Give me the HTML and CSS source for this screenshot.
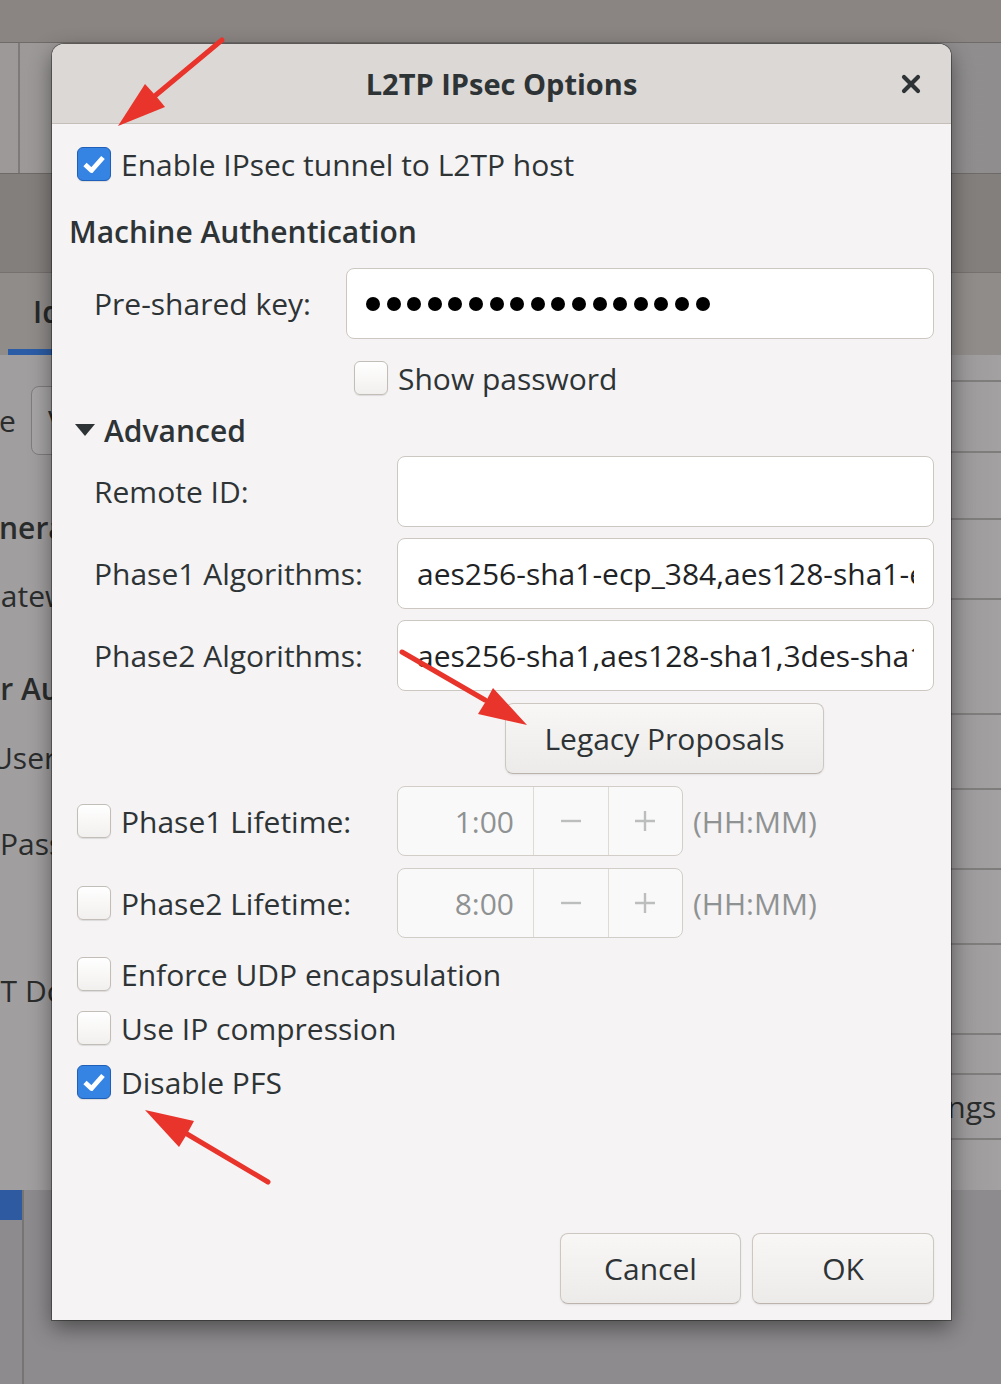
FILE: index.html
```html
<!DOCTYPE html>
<html lang="en">
<head>
<meta charset="UTF-8">
<title>L2TP IPsec Options</title>
<link rel="stylesheet" href="styles.css">
</head>
<body>

<!-- parent window, dimmed behind the dialog -->
<div class="desk">
  <div class="topbar"></div>
  <div class="p-head"><div class="p-split"></div></div>
  <div class="p-dark"></div>
  <div class="p-tabs"><span class="p-tab">Identity</span></div>
  <div class="p-content">
    <div class="p-left">
      <div class="pl-row first"><span class="cut-name">Name</span><span class="pl-box">VPN</span></div>
      <div class="pl-row gap52 bold"><span class="cut-ge">General</span></div>
      <div class="pl-row gap28"><span class="cut-g">Gateway</span></div>
      <div class="pl-row gap53 bold"><span class="cut-use">User Authentication</span></div>
      <div class="pl-row gap29"><span class="cut-u">User name</span></div>
      <div class="pl-row gap46"><span>Password</span></div>
      <div class="pl-row gap107"><span class="cut-n">NT Domain</span></div>
    </div>
    <div class="p-right">
      <div class="pr h27"></div>
      <div class="pr h71"></div>
      <div class="pr h67"></div>
      <div class="pr h80"></div>
      <div class="pr h115"></div>
      <div class="pr h75"></div>
      <div class="pr h80"></div>
      <div class="pr h75"></div>
      <div class="pr h90"></div>
      <div class="pr h40"></div>
      <div class="pr h65"><span class="cut-set">Settings</span></div>
    </div>
  </div>
  <div class="p-foot"><div class="pf-col"><div class="pf-blue"></div></div></div>
</div>

<div class="dialog">
  <div class="titlebar">
    <span></span>
    <span class="title">L2TP IPsec Options</span>
    <span class="close">
      <svg width="20" height="20" viewBox="0 0 20 20"><path d="M3 3L17 17M17 3L3 17" stroke="#2e3436" stroke-width="4.2" stroke-linecap="round"/></svg>
    </span>
  </div>

  <div class="body">
    <div class="crow r-enable">
      <span class="check on"><svg width="24" height="20" viewBox="0 0 24 20"><path d="M3 10.5L9.5 16.5L21 3.5" fill="none" stroke="#fff" stroke-width="4.8" stroke-linejoin="round"/></svg></span>
      <span>Enable IPsec tunnel to L2TP host</span>
    </div>

    <div class="heading">Machine Authentication</div>

    <div class="psk">
      <span class="lbl">Pre-shared key:</span>
      <div class="entry dots">
        <i></i><i></i><i></i><i></i><i></i><i></i><i></i><i></i><i></i><i></i><i></i><i></i><i></i><i></i><i></i><i></i><i></i>
      </div>
    </div>

    <div class="crow r-show">
      <span class="check"></span>
      <span>Show password</span>
    </div>

    <div class="expander">
      <svg width="20" height="14" viewBox="0 0 20 14"><path d="M0 1H20L10 13Z" fill="#2e3436"/></svg>
      <span>Advanced</span>
    </div>

    <div class="adv">
      <span class="lbl">Remote ID:</span>
      <div class="entry"></div>
      <span class="lbl">Phase1 Algorithms:</span>
      <div class="entry"><span class="etext">aes256-sha1-ecp_384,aes128-sha1-ecp_256,3des-sha1-modp1024</span></div>
      <span class="lbl">Phase2 Algorithms:</span>
      <div class="entry"><span class="etext">aes256-sha1,aes128-sha1,3des-sha1</span></div>
    </div>

    <button class="btn legacy">Legacy Proposals</button>

    <div class="life">
      <div class="crow">
        <span class="check"></span>
        <span>Phase1 Lifetime:</span>
      </div>
      <div class="spin">
        <span class="sv">1:00</span>
        <span class="sb"><svg width="22" height="22" viewBox="0 0 22 22"><path d="M1 11H21" stroke="#bcbebe" stroke-width="2.4"/></svg></span>
        <span class="sb"><svg width="22" height="22" viewBox="0 0 22 22"><path d="M1 11H21M11 1V21" stroke="#bcbebe" stroke-width="2.4"/></svg></span>
      </div>
      <span class="unit">(HH:MM)</span>

      <div class="crow">
        <span class="check"></span>
        <span>Phase2 Lifetime:</span>
      </div>
      <div class="spin">
        <span class="sv">8:00</span>
        <span class="sb"><svg width="22" height="22" viewBox="0 0 22 22"><path d="M1 11H21" stroke="#bcbebe" stroke-width="2.4"/></svg></span>
        <span class="sb"><svg width="22" height="22" viewBox="0 0 22 22"><path d="M1 11H21M11 1V21" stroke="#bcbebe" stroke-width="2.4"/></svg></span>
      </div>
      <span class="unit">(HH:MM)</span>
    </div>

    <div class="crow r-udp">
      <span class="check"></span>
      <span>Enforce UDP encapsulation</span>
    </div>
    <div class="crow r-ipc">
      <span class="check"></span>
      <span>Use IP compression</span>
    </div>
    <div class="crow r-pfs">
      <span class="check on"><svg width="24" height="20" viewBox="0 0 24 20"><path d="M3 10.5L9.5 16.5L21 3.5" fill="none" stroke="#fff" stroke-width="4.8" stroke-linejoin="round"/></svg></span>
      <span>Disable PFS</span>
    </div>

    <div class="actions">
      <button class="btn cancel">Cancel</button>
      <button class="btn ok">OK</button>
    </div>
  </div>
</div>

<!-- red annotation arrows -->
<svg class="arrows" width="1001" height="1384" viewBox="0 0 1001 1384">
  <g stroke="#e8342b" stroke-width="5" stroke-linecap="round" fill="#e8342b">
    <line x1="222" y1="40" x2="156" y2="95"/>
    <line x1="402" y1="652" x2="485" y2="700"/>
    <line x1="268" y1="1182" x2="187" y2="1134"/>
  </g>
  <g fill="#e8342b">
    <polygon points="118,126 145,84 156,96 165,107"/>
    <polygon points="527,725 493,688 486,701 478,714"/>
    <polygon points="145,1110 194,1121 187,1134 179,1147"/>
  </g>
</svg>

</body>
</html>
```

FILE: styles.css
```css
* {box-sizing: border-box;}
body {margin: 0;width: 1001px;height: 1384px;overflow: hidden;position: relative;background: #8b8987;font-family: "Open Sans", "Noto Sans", sans-serif;font-size: 30px;color: #2e3436;}

/* parent window */
.desk {height: 100%;display: flex;flex-direction: column;}
.topbar {height: 43px;background: #8a8583;border-bottom: 1px solid #6f6b69;}
.p-head {height: 131px;background: linear-gradient(90deg, #9c9998, #8f8d8e);border-bottom: 1px solid #6e6a68;}
.p-split {width: 20px;height: 100%;border-right: 2px solid #7d7a78;}
.p-dark {height: 99px;background: #837f7d;border-bottom: 1px solid #76716f;}
.p-tabs {height: 82px;background: #8f8c8a;display: flex;align-items: stretch;}
.p-tab {margin-left: 8px;padding-left: 25px;width: 260px;display: flex;align-items: center;font-weight: 600;color: #262828;border-bottom: 6px solid #2b5ca6;}
.p-content {height: 835px;background: #a09e9f;display: flex;justify-content: space-between;color: #2a2c2c;}
.p-left {width: 52px;padding-top: 30px;}
.pl-row {height: 40px;display: flex;align-items: center;white-space: nowrap;}
.pl-row.first {height: 70px;}
.pl-row.bold {font-weight: 600;}
.gap52 {margin-top: 52px;}
.gap28 {margin-top: 28px;}
.gap53 {margin-top: 53px;}
.gap29 {margin-top: 29px;}
.gap46 {margin-top: 46px;}
.gap107 {margin-top: 107px;}
.cut-name {margin-left: -68px;}
.cut-ge {margin-left: -40px;}
.cut-g {margin-left: -21px;}
.cut-use {margin-left: -54px;}
.cut-u {margin-left: -9px;}
.cut-n {margin-left: -22px;}
.pl-box {margin-left: 15px;height: 69px;padding: 0 16px;display: flex;align-items: center;border: 1px solid #7f7d7d;border-radius: 8px;background: #a6a4a5;}
.p-right {width: 50px;display: flex;flex-direction: column;background: linear-gradient(90deg, #9a9899, #a3a1a2);}
.pr {border-bottom: 2px solid #7f7c7c;flex: none;display: flex;align-items: center;white-space: nowrap;}
.h27 {height: 27px;}
.h71 {height: 71px;}
.h67 {height: 67px;}
.h80 {height: 80px;}
.h115 {height: 115px;}
.h75 {height: 75px;}
.h90 {height: 90px;}
.h40 {height: 40px;}
.h65 {height: 65px;}
.cut-set {margin-left: -66px;}
.p-foot {flex: 1;background: #8d8b8d;}
.pf-col {width: 24px;height: 100%;border-right: 2px solid #777474;}
.pf-blue {width: 22px;height: 30px;background: #2d5aa0;}

/* dialog */
.dialog {position: absolute;left: 52px;top: 44px;width: 899px;height: 1276px;background: #f5f3f3;border-radius: 12px 12px 0 0;box-shadow: 0 0 0 1px rgba(0,0,0,.35), 0 8px 22px rgba(0,0,0,.45);display: flex;flex-direction: column;overflow: hidden;}
.titlebar {height: 80px;flex: none;background: #dcd8d5;border-bottom: 1px solid #c4bdb8;display: grid;grid-template-columns: 1fr auto 1fr;align-items: center;}
.title {font-weight: 700;font-size: 29px;}
.close {justify-self: end;margin-right: 30px;display: flex;}
.body {flex: 1;display: flex;flex-direction: column;padding: 0 17px 16px 25px;}

.crow {display: flex;align-items: center;gap: 10px;height: 34px;white-space: nowrap;}
.check {width: 34px;height: 34px;flex: none;border-radius: 6px;border: 1px solid #c3bdb8;background: linear-gradient(#ffffff, #f2f0ee);box-shadow: 0 1px 1px rgba(0,0,0,.1);display: flex;align-items: center;justify-content: center;}
.check.on {background: #3584e4;border-color: #1f5fb8;}

.r-enable {margin-top: 23px;}
.heading {margin-top: 33px;margin-left: -8px;height: 34px;display: flex;align-items: center;font-weight: 600;}
.psk {margin-top: 20px;display: grid;grid-template-columns: 269px minmax(0, 1fr);align-items: center;}
.lbl {padding-left: 17px;white-space: nowrap;}
.entry {min-width: 0;height: 71px;background: #fff;border: 1px solid #cdc7c2;border-radius: 8px;display: flex;align-items: center;padding: 0 19px;color: #1f2325;overflow: hidden;}
.etext {flex: 1;min-width: 0;overflow: hidden;white-space: nowrap;}
.dots {gap: 6.6px;}
.dots i {width: 14px;height: 14px;border-radius: 50%;background: #000;}
.r-show {margin-top: 22px;margin-left: 277px;}
.expander {margin-top: 18px;margin-left: -2px;height: 34px;display: flex;align-items: center;gap: 9px;font-weight: 600;}
.adv {margin-top: 9px;display: grid;grid-template-columns: 320px minmax(0, 1fr);grid-auto-rows: 71px;row-gap: 11px;align-items: center;}

.btn {font: inherit;color: #2e3436;height: 71px;border: 1px solid #cdc7c2;border-bottom-color: #bbb3ac;border-radius: 8px;background: linear-gradient(#f8f7f6, #ecebe9);box-shadow: 0 1px 2px rgba(0,0,0,.08);padding: 0;}
.legacy {margin-top: 12px;margin-left: 428px;width: 319px;}

.life {margin-top: 12px;display: grid;grid-template-columns: 320px auto 1fr;grid-auto-rows: 70px;row-gap: 12px;align-items: center;}
.spin {height: 70px;width: 286px;display: flex;border: 1px solid #d3cdc8;border-radius: 8px;background: #faf9f9;color: #8f9293;}
.sv {width: 135px;display: flex;align-items: center;justify-content: flex-end;padding-right: 19px;}
.sb {flex: 1;display: flex;align-items: center;justify-content: center;border-left: 1px solid #dfdad6;}
.unit {margin-left: 10px;color: #8f9293;}

.r-udp {margin-top: 19px;}
.r-ipc {margin-top: 20px;}
.r-pfs {margin-top: 20px;}

.actions {margin-top: auto;display: flex;justify-content: flex-end;gap: 11px;}
.cancel {width: 181px;}
.ok {width: 182px;}

.arrows {position: absolute;left: 0;top: 0;pointer-events: none;}
```
